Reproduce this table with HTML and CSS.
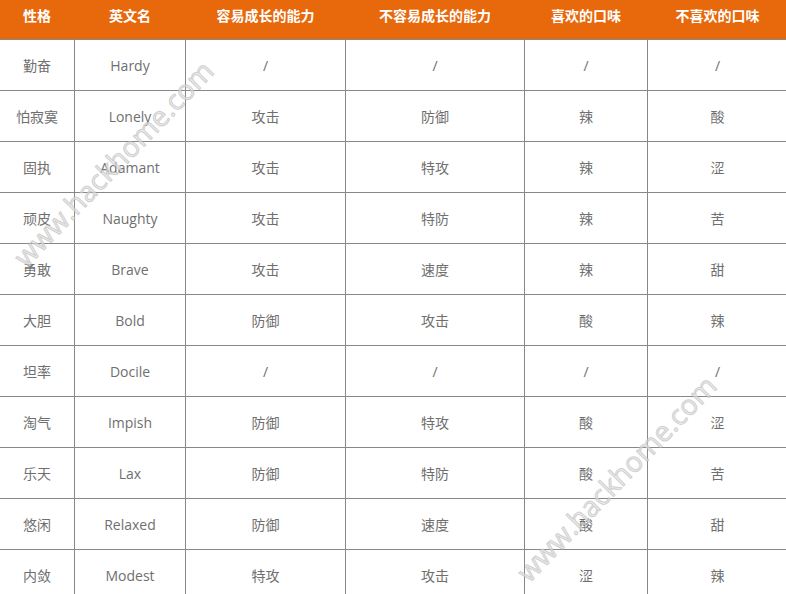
FILE: index.html
```html
<!DOCTYPE html>
<html lang="zh">
<head>
<meta charset="utf-8">
<title>性格表</title>
<link rel="stylesheet" href="styles.css">
</head>
<body>
<div class="wrap">
<table class="nature">
  <colgroup>
    <col class="c1"><col class="c2"><col class="c3"><col class="c4"><col class="c5"><col class="c6">
  </colgroup>
  <thead>
    <tr><th>性格</th><th>英文名</th><th>容易成长的能力</th><th>不容易成长的能力</th><th>喜欢的口味</th><th>不喜欢的口味</th></tr>
  </thead>
  <tbody>
    <tr><td>勤奋</td><td>Hardy</td><td>/</td><td>/</td><td>/</td><td>/</td></tr>
    <tr><td>怕寂寞</td><td>Lonely</td><td>攻击</td><td>防御</td><td>辣</td><td>酸</td></tr>
    <tr><td>固执</td><td>Adamant</td><td>攻击</td><td>特攻</td><td>辣</td><td>涩</td></tr>
    <tr><td>顽皮</td><td>Naughty</td><td>攻击</td><td>特防</td><td>辣</td><td>苦</td></tr>
    <tr><td>勇敢</td><td>Brave</td><td>攻击</td><td>速度</td><td>辣</td><td>甜</td></tr>
    <tr><td>大胆</td><td>Bold</td><td>防御</td><td>攻击</td><td>酸</td><td>辣</td></tr>
    <tr><td>坦率</td><td>Docile</td><td>/</td><td>/</td><td>/</td><td>/</td></tr>
    <tr><td>淘气</td><td>Impish</td><td>防御</td><td>特攻</td><td>酸</td><td>涩</td></tr>
    <tr><td>乐天</td><td>Lax</td><td>防御</td><td>特防</td><td>酸</td><td>苦</td></tr>
    <tr><td>悠闲</td><td>Relaxed</td><td>防御</td><td>速度</td><td>酸</td><td>甜</td></tr>
    <tr><td>内敛</td><td>Modest</td><td>特攻</td><td>攻击</td><td>涩</td><td>辣</td></tr>
  </tbody>
</table>
<span class="wm wm1">www.hackhome.com</span>
<span class="wm wm2">www.hackhome.com</span>
</div>
</body>
</html>
```
FILE: styles.css
```css
html, body {
  margin: 0;
  padding: 0;
  background: #fff;
  overflow: hidden;
}
.wrap {
  position: relative;
  width: 786px;
  height: 594px;
  overflow: hidden;
}
.nature {
  border-collapse: collapse;
  table-layout: fixed;
  width: 788px;
  margin-left: -1px;
  font-family: "Open Sans", "Noto Sans CJK SC", sans-serif;
  font-size: 14px;
  color: #6f6f6f;
}
.c1 { width: 75px; }
.c2 { width: 111px; }
.c3 { width: 160px; }
.c4 { width: 179px; }
.c5 { width: 123px; }
.c6 { width: 140px; }
.nature th {
  background: #e8680c;
  color: #fff;
  font-weight: bold;
  font-family: "Noto Sans CJK SC", sans-serif;
  font-size: 14px;
  height: 29px;
  padding: 0 0 10px 0;
  border: 1px solid #e8680c;
  border-bottom: 1px solid #888;
  border-top: none;
  text-align: center;
  vertical-align: middle;
}
.nature td {
  height: 50px;
  padding: 0;
  border: 1px solid #888;
  text-align: center;
  vertical-align: middle;
}
.wm {
  position: absolute;
  font-family: "Open Sans", sans-serif;
  font-size: 28px;
  color: rgba(225,225,225,0.7);
  -webkit-text-stroke: 1px rgba(185,185,185,0.6);
  white-space: nowrap;
  transform: translate(-50%, -50%) rotate(-46deg);
  pointer-events: none;
}
.wm1 { left: 113px; top: 163px; }
.wm2 { left: 616px; top: 478px; }
```
